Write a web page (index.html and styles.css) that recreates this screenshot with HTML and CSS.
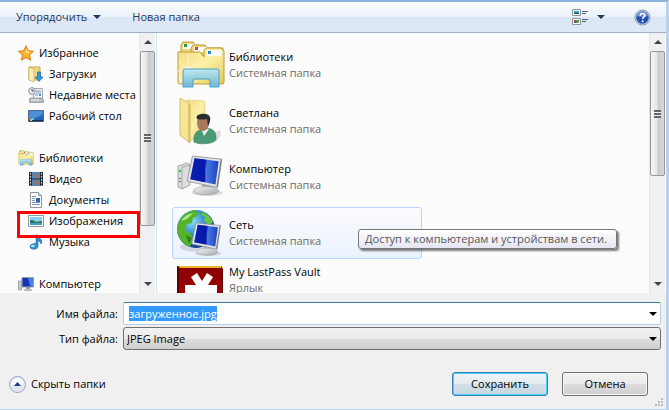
FILE: index.html
```html
<!DOCTYPE html>
<html lang="ru">
<head>
	<meta charset="utf-8">
	<title>Сохранение</title>
	<link rel="stylesheet" href="styles.css">
</head>
<body>
	<svg class="defs" aria-hidden="true">
		<defs>
			<linearGradient id="yellow" x1="0" y1="0" x2="1" y2="1">
				<stop offset="0" stop-color="#f3dc84"/><stop offset=".5" stop-color="#fbf0a8"/><stop offset="1" stop-color="#e6c650"/>
			</linearGradient>
			<linearGradient id="sky" x1="0" y1="0" x2="0" y2="1">
				<stop offset="0" stop-color="#b9e6f4"/><stop offset="1" stop-color="#62b4de"/>
			</linearGradient>
			<linearGradient id="screen" x1="0" y1="0" x2="1" y2="0">
				<stop offset="0" stop-color="#1030b8"/><stop offset=".5" stop-color="#0a18a0"/><stop offset=".55" stop-color="#4a78dc"/><stop offset="1" stop-color="#1c40c8"/>
			</linearGradient>
			<linearGradient id="metal" x1="0" y1="0" x2="1" y2="1">
				<stop offset="0" stop-color="#f4f4f4"/><stop offset="1" stop-color="#a4a8ac"/>
			</linearGradient>
			<radialGradient id="ocean" cx=".4" cy=".3" r=".7">
				<stop offset="0" stop-color="#8fdcf8"/><stop offset=".5" stop-color="#2f88d0"/><stop offset="1" stop-color="#123c88"/>
			</radialGradient>
			<linearGradient id="crimson" x1="0" y1="0" x2="0" y2="1">
				<stop offset="0" stop-color="#8c0000"/><stop offset="1" stop-color="#a80808"/>
			</linearGradient>
			<symbol id="monitor" viewBox="0 0 34 40">
				<ellipse cx="19" cy="36" rx="15" ry="3" fill="#000" opacity=".12"/>
				<path d="M14 27l9 2v5h-9z" fill="#a9adb1"/>
				<ellipse cx="18" cy="34" rx="12" ry="4" fill="url(#metal)" stroke="#a0a4a8" stroke-width=".6"/>
				<path d="M5 1l28 3-4 27L0 25z" fill="#e2e3e4" stroke="#8d9197" stroke-width=".8"/>
				<path d="M7 3l23 3-3 22L3 23z" fill="url(#screen)"/>
				<path d="M7 3l12 1.500-4 21L3 23z" fill="#0718b0" opacity=".6"/>
				<path d="M33 4l-4 27-1-1 4-26z" fill="#777"/>
			</symbol>
			<symbol id="libs" viewBox="0 0 48 48">
				<path d="M4 14V4l2-3h10l2 3h3v6z" fill="#efd67a" stroke="#bd9a3a"/>
				<rect x="6" y="3" width="13" height="5" fill="#fff"/>
				<rect x="7" y="3" width="3" height="3" fill="#24a044"/>
				<path d="M14 14V7l2-3h12l2 3h16v8z" fill="#efd67a" stroke="#bd9a3a"/>
				<rect x="17" y="6" width="13" height="5" fill="#fff"/>
				<rect x="18" y="6" width="3" height="3" fill="#e0402a"/>
				<path d="M1 11h22l4 5h0V9l2-2h15l3 3v31q0 2-2 2H3q-2 0-2-2z" fill="url(#yellow)" stroke="#bd9a3a"/>
				<rect x="30" y="9" width="14" height="6" fill="#fff"/>
				<rect x="31" y="10" width="3" height="3" fill="#2a86d8"/>
				<path d="M11 14v30M0 30h24M2 20l18 20M20 21L3 39" stroke="#fff" stroke-width="1" opacity=".55"/>
				<circle cx="11" cy="30" r="4" fill="#fff" opacity=".7"/>
				<path d="M6 46V30q0-2 2-2h32q2 0 2 2v16h-9v-6q0-2-2-2H18q-2 0-2 2v6z" fill="url(#sky)" fill-opacity=".9" stroke="#4a9fcb"/>
			</symbol>
		</defs>
	</svg>

	<div class="dialog">
		<div class="toolbar">
			<button type="button" class="tool">Упорядочить <span class="caret"></span></button>
			<button type="button" class="tool">Новая папка</button>
			<button type="button" class="tool view" aria-label="Вид">
				<svg width="17" height="16" viewBox="0 0 17 16">
					<path d="M.5.500h8v6h-8zM.500 9.500h8v6h-8z" fill="#fff" stroke="#8a93a0"/>
					<path d="M2 2h5v3H2z" fill="#3d9dbd"/><path d="M2 4h5v1H2z" fill="#1c4f58"/>
					<path d="M2 11h2v2H2z" fill="#d8342a"/><path d="M4 11h3v2H4z" fill="#3a9d32"/><path d="M2 13h3v1H2z" fill="#2b58c8"/><path d="M5 13h2v1H5z" fill="#e0b020"/>
					<path d="M10 2.500h6M10 4.500h4M10 10.500h6M10 12.500h4" stroke="#4d6078"/>
				</svg>
				<span class="caret"></span>
			</button>
			<button type="button" class="tool help" aria-label="Справка">
				<svg width="17" height="17" viewBox="0 0 17 17">
					<circle cx="8.500" cy="8.500" r="7.500" fill="#e4e8ee" stroke="#8690a0"/>
					<circle cx="8.500" cy="8.500" r="6.300" fill="#2450b4"/>
					<path d="M3 7a5.600 5.600 0 0 1 11 0q-5 2-11 0z" fill="#6c92dc"/>
					<path d="M6.200 6.700q0-2.200 2.300-2.200t2.300 1.900q0 1-1.100 1.700-1 .6-1 1.900" fill="none" stroke="#fff" stroke-width="1.600"/>
					<circle cx="8.600" cy="12.200" r="1" fill="#fff"/>
				</svg>
			</button>
		</div>

		<div class="browser">
			<nav class="tree">
				<ul>
					<li><a href="#" class="root">
						<svg width="16" height="16" viewBox="0 0 16 16"><path d="M8 .8l2.200 4.900 5.300.6-4 3.600 1.200 5.300L8 12.500l-4.700 2.700 1.200-5.300-4-3.600 5.300-.6z" fill="#fbb32c" stroke="#d97a1c"/><path d="M8 3l1.400 3.600 3.600.4-5 1.500z" fill="#ffe88a"/></svg>
						Избранное</a></li>
					<li><a href="#">
						<svg width="16" height="16" viewBox="0 0 16 16"><path d="M1 1h11v13H1z" fill="#efd987" stroke="#c9a84e"/><path d="M1 1l5 2v13l-5-2z" fill="#fcf1b4" stroke="#c9a84e" stroke-width=".7"/><path d="M9.500 6h3v5H15l-4 4.500L7 11h2.500z" fill="#2f9ae0" stroke="#1766a8" stroke-width=".7"/></svg>
						Загрузки</a></li>
					<li><a href="#">
						<svg width="16" height="16" viewBox="0 0 16 16"><path d="M5.500 1.500h9v10h-9z" fill="#f6f6f6" stroke="#a2a6aa"/><path d="M8 4h5M8 6h5M7 8h3" stroke="#7296bb"/><path d="M11 7h2v2h-2z" fill="#4f8fd0"/><path d="M2 11h12l1.500 2v2.500H1.500V13z" fill="#b7bcc2" stroke="#858a90" stroke-width=".7"/><path d="M3 13h8" stroke="#eef4f8"/><circle cx="4" cy="4" r="3.400" fill="#e4eaf0" stroke="#8c949e"/><path d="M4 2v2h2" fill="none" stroke="#40566e"/></svg>
						Недавние места</a></li>
					<li><a href="#">
						<svg width="16" height="16" viewBox="0 0 16 16"><path d="M.5 2.500h15v11H.5z" fill="#2763b4" stroke="#566680"/><path d="M1 3h14v3Q8 11 1 11z" fill="#4c8fd6"/><path d="M1 12h14v1.500H1z" fill="#17305a"/><path d="M2 11h2v2H2z" fill="#f0bd35"/><path d="M4 10h2v2H4z" fill="#62c2e8"/></svg>
						Рабочий стол</a></li>
				</ul>
				<ul>
					<li><a href="#" class="root">
						<svg width="16" height="16"><use href="#libs"/></svg>
						Библиотеки</a></li>
					<li><a href="#">
						<svg width="16" height="16" viewBox="0 0 16 16"><path d="M1 1h14v14H1z" fill="#2b2f34"/><path d="M4 1h8v6.500H4zM4 8.500h8V15H4z" fill="#3c8fcc"/><path d="M5 2l4 1 2 3-4 1zM5 10l4-1 2 4-3 2z" fill="#b7674a"/><path d="M2.500 2v13M13.500 2v13" stroke="#e5e8ea" stroke-dasharray="1.500 1.500"/></svg>
						Видео</a></li>
					<li><a href="#">
						<svg width="16" height="16" viewBox="0 0 16 16"><path d="M2.500.5h8l3 3v12h-11z" fill="#fbfcfd" stroke="#8b95a0"/><path d="M10.500.5v3h3" fill="#d5dde5" stroke="#8b95a0"/><path d="M4 4.500h4M4 6.500h3M4 8.500h3M4 10.500h8M4 12.500h8" stroke="#7d98b4"/><path d="M8 6h4v4H8z" fill="#2e66b0"/></svg>
						Документы</a></li>
					<li class="marked"><a href="#">
						<svg width="16" height="16" viewBox="0 0 16 16"><path d="M.5 2.500h15v11H.5z" fill="#fff" stroke="#8f969e"/><path d="M2 4h12v8H2z" fill="#84cdea"/><path d="M2 7q4 0 6 2l6-1v4H2z" fill="#2c6f5c"/><path d="M2 10h12v2H2z" fill="#3fa2c8"/></svg>
						Изображения</a></li>
					<li><a href="#">
						<svg width="16" height="16" viewBox="0 0 16 16"><path d="M8 1h2q0 2 2.500 4T13 10q-.5-2.500-3-3.500V12q0 3-4 3.300Q2 15.300 2 12.500 2 10 6 9.500l2 .2z" fill="#2f8fd4" stroke="#1c69a8" stroke-width=".6"/><ellipse cx="5" cy="12" rx="2" ry="1.300" fill="#a4dcf6"/></svg>
						Музыка</a></li>
				</ul>
				<ul>
					<li><a href="#" class="root">
						<svg width="16" height="16" viewBox="0 0 16 16"><path d="M.5 5h3v9h-3z" fill="#c6cacd" stroke="#8b9095" stroke-width=".7"/><path d="M4 1.500h11.500v9.500H4z" fill="#1434b8" stroke="#9ba1a8"/><path d="M10 2h5v8h-3z" fill="#4e7de0"/><path d="M8 11h4v2H8z" fill="#999"/><ellipse cx="10" cy="14" rx="4.500" ry="1.300" fill="#b9bdc1"/></svg>
						Компьютер</a></li>
				</ul>
			</nav>
			<div class="scroll tree-scroll">
				<span class="up"></span>
				<span class="thumb"></span>
				<span class="down"></span>
			</div>

			<div class="files">
				<a href="#" class="file">
					<svg width="48" height="48"><use href="#libs"/></svg>
					<span class="info">Библиотеки<small>Системная папка</small></span>
				</a>
				<a href="#" class="file">
					<svg width="48" height="48" viewBox="0 0 48 48">
						<path d="M28 40l15-7q3 5-4 12z" fill="#000" opacity=".12"/>
						<path d="M10 3l17 1q1 0 1 2v32l-16 6z" fill="url(#yellow)" stroke="#dcc77e" stroke-width=".7"/>
						<path d="M3 1l9 5q1 1 1 3v37l-9-7q-1-1-1-2z" fill="#f7e695" stroke="#cdb05c" stroke-width=".8"/>
						<path d="M12 7v38" stroke="#cba949"/>
						<path d="M17 45q-1-8 4-11l7-3 6 1q5 2 5 9 0 4-6 5-10 2-16-1z" fill="#4b9b79" stroke="#2b7257" stroke-width=".6"/>
						<path d="M24 31l3 8 5-7z" fill="#e9f1ed"/>
						<ellipse cx="26" cy="26" rx="6" ry="8" fill="#a8795a"/>
						<path d="M20 22q-2-4 4-5 7-1 9 3 1 4-2 9l-1-7q-5 1-10 0z" fill="#2b2d31"/>
					</svg>
					<span class="info">Светлана<small>Системная папка</small></span>
				</a>
				<a href="#" class="file">
					<svg width="48" height="48" viewBox="0 0 48 48">
						<path d="M1 13l9-3 3 2v20L5 36l-4-2z" fill="#dcdee0" stroke="#8f9498" stroke-width=".8"/>
						<path d="M5 14v22M5 14l8-2" stroke="#a3a8ac" fill="none"/>
						<circle cx="3" cy="18" r="1.300" fill="#3cc832"/>
						<path d="M2 25l2 1M2 28l2 1" stroke="#666"/>
						<use href="#monitor" x="10" y="2" width="36" height="42"/>
					</svg>
					<span class="info">Компьютер<small>Системная папка</small></span>
				</a>
				<div class="hovered">
					<a href="#" class="file active" aria-describedby="tip">
						<svg width="48" height="48" viewBox="0 0 48 48">
							<ellipse cx="21" cy="38" rx="18" ry="5" fill="#000" opacity=".12"/>
							<circle cx="19" cy="20" r="19" fill="url(#ocean)"/>
							<path d="M3 11Q8 3 17 1l5 3-3 4-3 1-1 5-5 1-2 6 5 3 3 5-3 9Q3 34 0 23q0-7 3-12z" fill="#54b52c"/>
							<path d="M25 3q8 3 11 10l-4 3-5-4 1-4-4-2z" fill="#6cc43e"/>
							<path d="M4 12q5-7 12-8l-6 6z" fill="#b6e984"/>
							<path d="M9 26l6 3-3 6z" fill="#2b7f22"/>
							<use href="#monitor" x="14" y="13" width="31" height="35"/>
						</svg>
						<span class="info">Сеть<small>Системная папка</small></span>
					</a>
					<span class="tooltip" role="tooltip" id="tip">Доступ к компьютерам и устройствам в сети.</span>
				</div>
				<a href="#" class="file link">
					<svg width="48" height="48" viewBox="0 0 48 48">
						<path d="M0 1h44l2 3v44H0z" fill="#5c0000"/>
						<path d="M1 1h43v2H3z" fill="#e8b52c"/>
						<path d="M2 3h43v45H2z" fill="url(#crimson)"/>
						<path d="M14 12l6-4 5 8 5-8 6 4-5 8h9v13H8V20h11z" fill="#fff"/>
					</svg>
					<span class="info">My LastPass Vault<small>Ярлык</small></span>
				</a>
			</div>
			<div class="scroll file-scroll">
				<span class="up"></span>
				<span class="thumb"></span>
				<span class="down"></span>
			</div>
		</div>

		<form class="save">
			<div class="row">
				<label for="name">Имя файла:</label>
				<div class="combo">
					<input type="text" id="name" value="загруженное.jpg" autocomplete="off" spellcheck="false">
					<span class="arrow"></span>
				</div>
			</div>
			<div class="row">
				<label for="type">Тип файла:</label>
				<div class="combo">
					<select id="type"><option>JPEG Image</option></select>
					<span class="arrow"></span>
				</div>
			</div>
			<div class="actions">
				<button type="button" class="hide">
					<svg width="17" height="17" viewBox="0 0 17 17"><circle cx="8.500" cy="8.500" r="8" fill="#e3e8f2" stroke="#98a4ba"/><path d="M2 8.500a6.500 6.500 0 0 1 13 0z" fill="#f9fafd"/><path d="M5 10l3.500-4 3.500 4z" fill="#1d3d8c"/></svg>
					Скрыть папки
				</button>
				<button type="submit" class="btn primary">Сохранить</button>
				<button type="button" class="btn">Отмена</button>
			</div>
			<svg class="grip" width="8" height="8" viewBox="0 0 8 8"><path d="M6 0h2v2H6zM3 3h2v2H3zM6 3h2v2H6zM0 6h2v2H0zM3 6h2v2H3zM6 6h2v2H6z" fill="#bcbcbc"/></svg>
		</form>
	</div>
	<script>
		var name_field = document.getElementById("name");
		name_field.focus();
		name_field.select();
	</script>
</body>
</html>
```
FILE: styles.css
```css
*, *:after {
	box-sizing: border-box;
	margin: 0;
	padding: 0;
}
body, button, input, select {
	font-family: "Open Sans", "Noto Sans", sans-serif;
	font-size: 11px;
	line-height: 16px;
	color: #000;
}
a {
	color: #000;
	text-decoration: none;
}
ul {
	list-style: none;
}
svg {
	flex: none;
}
.defs {
	position: absolute;
	width: 0;
	height: 0;
}
.dialog {
	display: flex;
	flex-direction: column;
	height: 100vh;
	border-top: 2px solid #8db4dc;
	border-right: 3px solid #b9d1ea;
	border-bottom: 1px solid #b9d1ea;
	background: #f0f0f0;
}

/* toolbar */
.toolbar {
	display: flex;
	flex: none;
	align-items: center;
	height: 31px;
	padding: 0 15px 0 16px;
	border-bottom: 1px solid #a0afc3;
	background: linear-gradient(#fbfdff, #eaf1fa 50%, #dce6f4 50%, #dde9f7);
}
.tool {
	display: flex;
	align-items: center;
	gap: 6px;
	margin-right: 31px;
	border: 0;
	background: none;
	color: #1e395b;
}
.tool.view {
	gap: 8px;
	margin: 0 29px 0 auto;
}
.tool.help {
	margin: 0;
}
.caret, .arrow {
	border: 4px solid transparent;
	border-top-color: #1e395b;
	border-bottom: 0;
}

/* panes */
.browser {
	display: flex;
	flex: 1;
	min-height: 0;
	overflow: hidden;
	background: #fcfcfc;
}
.tree {
	flex: none;
	width: 139px;
	padding: 9px 0 0 18px;
	white-space: nowrap;
}
.tree ul {
	margin-bottom: 21px;
}
.tree a {
	display: flex;
	align-items: center;
	gap: 5px;
	height: 21px;
	padding-left: 10px;
}
.tree .root {
	padding-left: 0;
}
.marked {
	position: relative;
}
.marked:after {
	content: "";
	position: absolute;
	top: 1px;
	left: -1px;
	z-index: 1;
	width: 123px;
	height: 27px;
	border: 3px solid #f00;
}
.scroll {
	display: flex;
	flex: none;
	flex-direction: column;
	align-items: center;
	width: 16px;
	padding: 7px 0;
	border-left: 1px solid #e6e6e6;
	background: #f0f0f0;
}
.up, .down {
	border: 4px solid transparent;
}
.up {
	border-top: 0;
	border-bottom-color: #444;
}
.down {
	margin-top: auto;
	border-bottom: 0;
	border-top-color: #444;
}
.thumb {
	position: relative;
	width: 15px;
	height: 71%;
	margin-top: 7px;
	border: 1px solid #979797;
	border-radius: 2px;
	background: linear-gradient(90deg, #f6f6f6, #e6e6e8 45%, #c9cbd0 55%, #d8d8dc);
}
.thumb:after {
	content: "";
	position: absolute;
	top: 50%;
	left: 3px;
	width: 7px;
	height: 8px;
	margin-top: -4px;
	background: repeating-linear-gradient(#666 0 2px, #eee 2px 3px);
}
.file-scroll {
	margin-right: 1px;
}
.file-scroll .thumb {
	height: 51%;
}
.files {
	flex: 1;
	min-width: 0;
	margin-left: 1px;
	padding: 6px 0 0 15px;
	border-left: 1px solid #d6e5f5;
}
.file {
	display: flex;
	align-items: center;
	gap: 4px;
	width: 250px;
	height: 52px;
	margin-bottom: 4px;
	padding-left: 4px;
	border: 1px solid transparent;
	border-radius: 3px;
}
.file.active {
	border-color: #b8d6fb;
	background: linear-gradient(#fafbfd, #ebf3fd);
}
.file.link .info {
	align-self: flex-start;
}
.info small {
	display: block;
	font-size: 11px;
	color: #6d6d6d;
}
.hovered {
	position: relative;
}
.tooltip {
	position: absolute;
	top: 22px;
	left: 186px;
	padding: 1px 9px 1px 6px;
	border: 1px solid #767676;
	border-radius: 3px;
	background: linear-gradient(#fff, #e4e5f0);
	box-shadow: 2px 2px 2px rgba(0, 0, 0, .5);
	color: #575757;
	white-space: nowrap;
}

/* file name and buttons */
.save {
	position: relative;
	flex: none;
	padding: 9px 5px 13px 9px;
}
.row {
	display: flex;
	align-items: center;
	gap: 5px;
	margin-bottom: 2px;
}
.row label {
	width: 109px;
	text-align: right;
}
.combo {
	position: relative;
	flex: 1;
}
.combo input, .combo select {
	display: block;
	width: 100%;
	height: 23px;
	appearance: none;
	outline: 0;
}
.combo input {
	padding: 0 18px 0 5px;
	border: 1px solid #b5cfe7;
	border-top-color: #3d7bad;
	border-radius: 2px;
	background: #fff;
}
.combo input::selection {
	background: #3399ff;
	color: #fff;
}
.combo select {
	padding: 0 18px 0 3px;
	border: 1px solid #707070;
	border-radius: 3px;
	background: linear-gradient(#f2f2f2, #ebebeb 50%, #dddddd 50%, #cfcfcf);
}
.arrow {
	position: absolute;
	top: 10px;
	right: 4px;
	border-top-color: #000;
	pointer-events: none;
}
.actions {
	display: flex;
	align-items: center;
	gap: 14px;
	padding: 20px 13px 0 0;
}
.hide {
	display: flex;
	align-items: center;
	gap: 5px;
	margin-right: auto;
	border: 0;
	background: none;
}
.btn {
	width: 86px;
	height: 24px;
	border: 1px solid #707070;
	border-radius: 3px;
	background: linear-gradient(#f2f2f2, #ebebeb 50%, #dddddd 50%, #cfcfcf);
	box-shadow: inset 0 0 0 1px #f8f8f8;
}
.btn.primary {
	width: 96px;
	border-color: #3c7fb1;
	background: linear-gradient(#eef3f6, #e3ecf1 50%, #d2dfe7 50%, #c6d6e0);
	box-shadow: inset 0 0 0 1px #48d1f5;
}
.grip {
	position: absolute;
	right: 3px;
	bottom: 3px;
}
```
